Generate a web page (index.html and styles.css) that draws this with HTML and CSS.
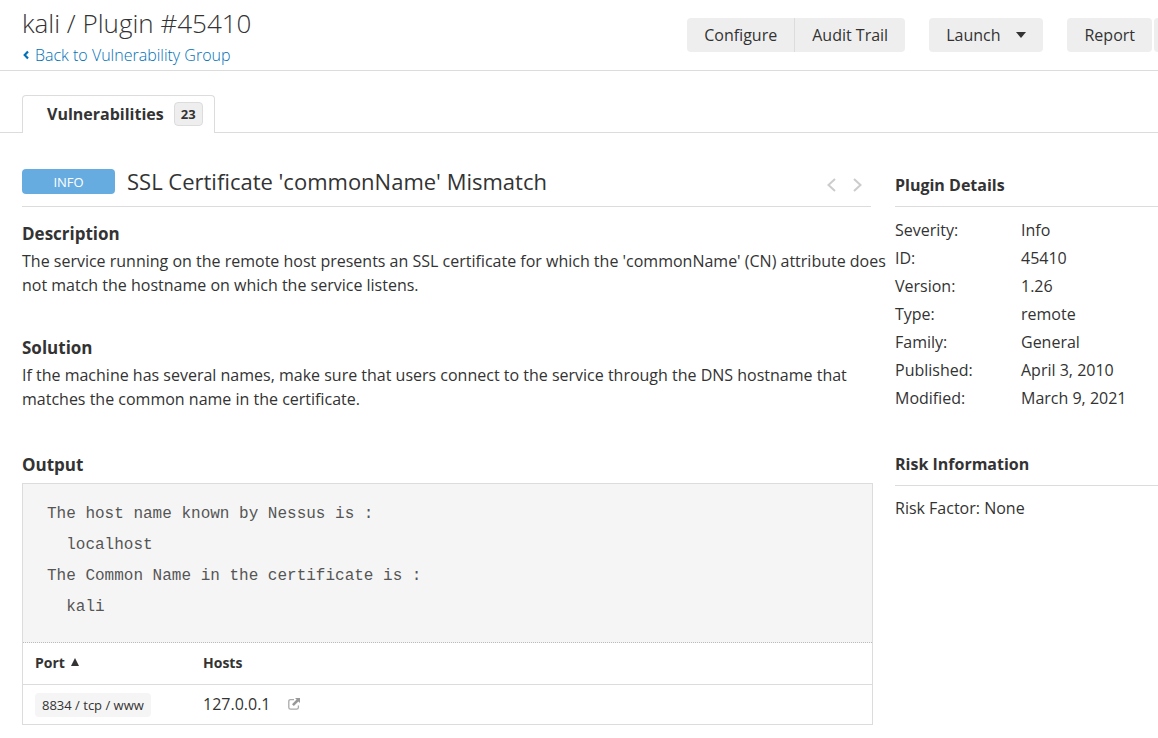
FILE: index.html
```html
<!DOCTYPE html>
<html lang="en">
<head>
<meta charset="utf-8">
<meta name="viewport" content="width=device-width, initial-scale=1">
<title>kali / Plugin #45410</title>
<link rel="stylesheet" href="styles.css">
</head>
<body>
<header class="page-header">
  <div class="heading">
    <h1 class="page-title">kali / Plugin #45410</h1>
    <a class="back-link" href="#group"><svg class="back-icon" viewBox="0 0 6 10" aria-hidden="true"><path d="M5 1.500 1.700 5 5 8.500" fill="none" stroke="currentColor" stroke-width="2.200"/></svg>Back to Vulnerability Group</a>
  </div>
  <div class="actions">
    <div class="button-group">
      <button class="button" type="button">Configure</button>
      <button class="button" type="button">Audit Trail</button>
    </div>
    <button class="button button-menu" type="button">Launch<svg class="caret" viewBox="0 0 10 6" aria-hidden="true"><path d="M0 0h10L5 6z" fill="currentColor"/></svg></button>
    <div class="split">
      <button class="button" type="button">Report</button>
      <button class="button button-edge" type="button" aria-label="More"></button>
    </div>
  </div>
</header>
<nav class="tabs">
  <a class="tab" href="#vulnerabilities">Vulnerabilities<span class="count">23</span></a>
</nav>
<div class="columns">
  <main class="main">
    <div class="plugin-bar">
      <span class="severity">INFO</span>
      <h2 class="plugin-title">SSL Certificate 'commonName' Mismatch</h2>
      <div class="pager">
        <button class="pager-button" type="button" aria-label="Previous"><svg class="pager-icon" viewBox="0 0 9 14" aria-hidden="true"><path d="M8 1 1.500 7 8 13" fill="none" stroke="currentColor" stroke-width="2"/></svg></button>
        <button class="pager-button" type="button" aria-label="Next"><svg class="pager-icon" viewBox="0 0 9 14" aria-hidden="true"><path d="M1 1l6.500 6L1 13" fill="none" stroke="currentColor" stroke-width="2"/></svg></button>
      </div>
    </div>
    <section class="section">
      <h3 class="section-title">Description</h3>
      <p class="text">The service running on the remote host presents an SSL certificate for which the 'commonName' (CN) attribute does not match the hostname on which the service listens.</p>
    </section>
    <section class="section">
      <h3 class="section-title">Solution</h3>
      <p class="text">If the machine has several names, make sure that users connect to the service through the DNS hostname that matches the common name in the certificate.</p>
    </section>
    <section class="section">
      <h3 class="section-title">Output</h3>
      <div class="output">
<pre class="log">The host name known by Nessus is :
  localhost
The Common Name in the certificate is :
  kali</pre>
        <table class="ports">
          <thead>
            <tr><th class="port-col" scope="col">Port<svg class="sort" viewBox="0 0 8 8" aria-hidden="true"><path d="M4 0l4 8H0z" fill="currentColor"/></svg></th><th scope="col">Hosts</th></tr>
          </thead>
          <tbody>
            <tr><td><span class="port">8834 / tcp / www</span></td><td>127.0.0.1<a class="open" href="#host" aria-label="Open host"><svg class="open-icon" viewBox="0 0 12 12" aria-hidden="true"><path d="M6 1.600H2.600Q.8 1.600.8 3.400v6Q.8 11.200 2.600 11.200h6q1.800 0 1.800-1.800V7.500" fill="none" stroke="#aaa" stroke-width="1.300"/><path d="M7 0h5v5l-1.600-1.600-4.600 4.600-1.800-1.800 4.600-4.600z" fill="#999"/></svg></a></td></tr>
          </tbody>
        </table>
      </div>
    </section>
  </main>
  <aside class="side">
    <section class="side-section">
      <h3 class="side-title">Plugin Details</h3>
      <dl class="details">
        <dt>Severity:</dt><dd>Info</dd>
        <dt>ID:</dt><dd>45410</dd>
        <dt>Version:</dt><dd>1.26</dd>
        <dt>Type:</dt><dd>remote</dd>
        <dt>Family:</dt><dd>General</dd>
        <dt>Published:</dt><dd>April 3, 2010</dd>
        <dt>Modified:</dt><dd>March 9, 2021</dd>
      </dl>
    </section>
    <section class="side-section">
      <h3 class="side-title">Risk Information</h3>
      <p class="risk">Risk Factor: None</p>
    </section>
  </aside>
</div>
</body>
</html>
```

FILE: styles.css
```css
* { box-sizing: border-box; }
body {
  margin: 0;
  background: #fff;
  color: #333;
  font: 16px/24px "Open Sans", sans-serif;
}
h1, h2, h3, p, pre, dl, dd { margin: 0; }
button { font: inherit; color: inherit; border: 0; cursor: pointer; }
svg { flex: none; }

.page-header {
  display: flex;
  justify-content: space-between;
  align-items: flex-start;
  padding: 3px 0 3px 22px;
  border-bottom: 1px solid #dcdcdc;
}
.page-title { font-size: 26px; line-height: 40px; font-weight: 300; }
.back-link {
  display: flex;
  align-items: center;
  gap: 6px;
  padding-left: 1px;
  color: #0071b9;
  font-weight: 300;
  text-decoration: none;
}
.back-icon { width: 6px; height: 10px; }

.actions { display: flex; gap: 24px; padding-top: 15px; }
.button-group { display: flex; }
.button {
  height: 34px;
  padding: 0 17px;
  border-radius: 4px;
  background: #eee;
}
.button-group .button:first-child { border-radius: 4px 0 0 4px; }
.button-group .button:last-child { border-radius: 0 4px 4px 0; border-left: 1px solid #dcdcdc; }
.button-menu { display: flex; align-items: center; gap: 16px; }
.caret { width: 10px; height: 6px; }
.split { display: flex; gap: 2px; }
.button-edge { width: 4px; padding: 0; border-radius: 4px 0 0 4px; }

.tabs {
  display: flex;
  margin-top: 24px;
  padding-left: 22px;
  box-shadow: inset 0 -1px #dcdcdc;
}
.tab {
  display: flex;
  align-items: center;
  gap: 10px;
  height: 38px;
  padding: 0 11px 2px 24px;
  border: 1px solid #dcdcdc;
  border-bottom: 0;
  border-radius: 4px 4px 0 0;
  background: #fff;
  color: #333;
  font-weight: 700;
  text-decoration: none;
}
.count {
  padding: 0 6px;
  border: 1px solid #dcdcdc;
  border-radius: 4px;
  background: #eee;
  font-size: 13px;
  line-height: 22px;
}

.columns {
  display: grid;
  grid-template-columns: minmax(0, 1fr) 263px;
  gap: 22px;
  padding: 32px 0 13px 22px;
}
.plugin-bar {
  display: flex;
  align-items: center;
  height: 42px;
  margin-right: 2px;
  padding-bottom: 8px;
  border-bottom: 1px solid #dcdcdc;
}
.severity {
  width: 93px;
  margin-right: 12px;
  padding-top: 1px;
  border-radius: 4px;
  background: #67ace1;
  color: #fff;
  font-size: 13px;
  line-height: 24px;
  text-align: center;
}
.plugin-title { padding-bottom: 2px; font-size: 22px; line-height: 30px; font-weight: 400; }
.pager { display: flex; gap: 17px; margin-left: auto; padding: 6px 9px 0 0; }
.pager-button { display: flex; padding: 0; background: none; color: #ccc; }
.pager-icon { width: 9px; height: 14px; }

.section { padding-top: 15px; }
.section + .section { padding-top: 39px; }
.section:last-child { padding-top: 42px; }
.section-title { font-size: 17px; line-height: 24px; font-weight: 700; }
/* The first line may run slightly into the column gutter. */
.text { margin-right: -16px; padding-top: 3px; }
.output { margin-top: 6px; border: 1px solid #dcdcdc; }
.log {
  padding: 15px 24px 19px;
  border-bottom: 1px dotted #bbb;
  background: #f5f5f5;
  color: #555;
  font: 16px/31px "Liberation Mono", monospace;
}
.ports { width: 100%; border-collapse: collapse; text-align: left; }
.ports th { height: 41px; padding: 0 12px; border-bottom: 1px solid #dcdcdc; font-size: 14px; }
.ports td { height: 40px; padding: 0 12px; }
.port-col { width: 168px; }
.sort { width: 8px; height: 8px; margin-left: 6px; vertical-align: 2px; }
.port {
  display: inline-block;
  padding: 0 7px;
  border-radius: 4px;
  background: #f5f5f5;
  font-size: 13px;
}
.open { margin-left: 17px; }
.open-icon { width: 12px; height: 12px; }

.side-title {
  height: 42px;
  padding-top: 8px;
  border-bottom: 1px solid #dcdcdc;
  font-size: 16px;
  line-height: 24px;
}
.details {
  display: grid;
  grid-template-columns: 126px 1fr;
  padding-top: 9px;
  line-height: 28px;
}
.side-section + .side-section { padding-top: 32px; }
.risk { padding-top: 10px; }
```
